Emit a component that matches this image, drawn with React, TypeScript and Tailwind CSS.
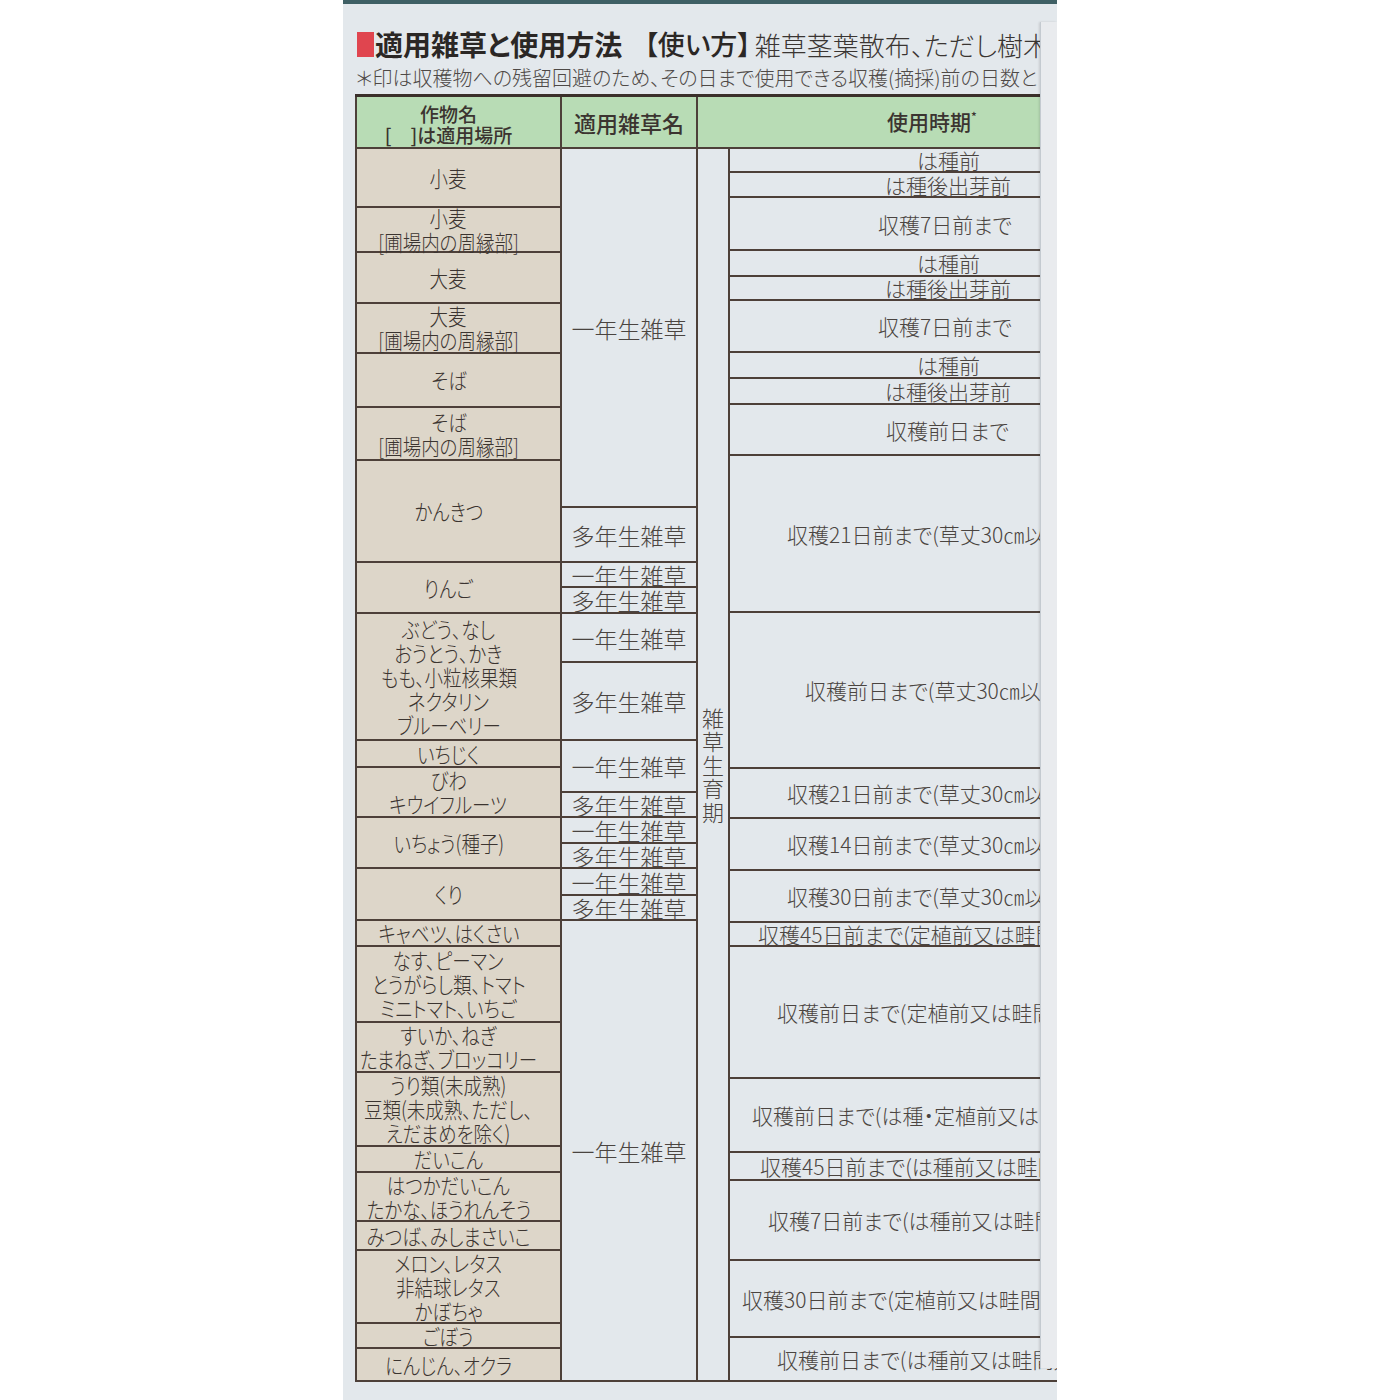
import React from "react";

type Crop = { lines: string[]; h: string };
type Weed = { t: string; h: string };
type Timing = { t: string; h: string; pl: string };

const crops: Crop[] = [
  { lines: ["小麦"], h: "h-[59px]" },
  { lines: ["小麦", "[圃場内の周縁部]"], h: "h-[45px]" },
  { lines: ["大麦"], h: "h-[51px]" },
  { lines: ["大麦", "[圃場内の周縁部]"], h: "h-[50px]" },
  { lines: ["そば"], h: "h-[54px]" },
  { lines: ["そば", "[圃場内の周縁部]"], h: "h-[53px]" },
  { lines: ["かんきつ"], h: "h-[102px]" },
  { lines: ["りんご"], h: "h-[51px]" },
  { lines: ["ぶどう、なし", "おうとう、かき", "もも、小粒核果類", "ネクタリン", "ブルーベリー"], h: "h-[127px]" },
  { lines: ["いちじく"], h: "h-[27px]" },
  { lines: ["びわ", "キウイフルーツ"], h: "h-[50px]" },
  { lines: ["いちょう(種子)"], h: "h-[51px]" },
  { lines: ["くり"], h: "h-[52px]" },
  { lines: ["キャベツ、はくさい"], h: "h-[26px]" },
  { lines: ["なす、ピーマン", "とうがらし類、トマト", "ミニトマト、いちご"], h: "h-[76px]" },
  { lines: ["すいか、ねぎ", "たまねぎ、ブロッコリー"], h: "h-[50px]" },
  { lines: ["うり類(未成熟)", "豆類(未成熟、ただし、", "えだまめを除く)"], h: "h-[74px]" },
  { lines: ["だいこん"], h: "h-[26px]" },
  { lines: ["はつかだいこん", "たかな、ほうれんそう"], h: "h-[49px]" },
  { lines: ["みつば、みしまさいこ"], h: "h-[29px]" },
  { lines: ["メロン、レタス", "非結球レタス", "かぼちゃ"], h: "h-[73px]" },
  { lines: ["ごぼう"], h: "h-[25px]" },
  { lines: ["にんじん、オクラ"], h: "flex-1" },
];

const weeds: Weed[] = [
  { t: "一年生雑草", h: "h-[359px]" },
  { t: "多年生雑草", h: "h-[55px]" },
  { t: "一年生雑草", h: "h-[25px]" },
  { t: "多年生雑草", h: "h-[26px]" },
  { t: "一年生雑草", h: "h-[49px]" },
  { t: "多年生雑草", h: "h-[78px]" },
  { t: "一年生雑草", h: "h-[52px]" },
  { t: "多年生雑草", h: "h-[25px]" },
  { t: "一年生雑草", h: "h-[26px]" },
  { t: "多年生雑草", h: "h-[25px]" },
  { t: "一年生雑草", h: "h-[27px]" },
  { t: "多年生雑草", h: "h-[25px]" },
  { t: "一年生雑草", h: "flex-1" },
];

const timings: Timing[] = [
  { t: "は種前", h: "h-[24px]", pl: "pl-[187px]" },
  { t: "は種後出芽前", h: "h-[25px]", pl: "pl-[155px]" },
  { t: "収穫7日前まで", h: "h-[53px]", pl: "pl-[148px]" },
  { t: "は種前", h: "h-[26px]", pl: "pl-[187px]" },
  { t: "は種後出芽前", h: "h-[24px]", pl: "pl-[155px]" },
  { t: "収穫7日前まで", h: "h-[52px]", pl: "pl-[148px]" },
  { t: "は種前", h: "h-[26px]", pl: "pl-[187px]" },
  { t: "は種後出芽前", h: "h-[26px]", pl: "pl-[155px]" },
  { t: "収穫前日まで", h: "h-[51px]", pl: "pl-[156px]" },
  { t: "収穫21日前まで(草丈30㎝以下)", h: "h-[157px]", pl: "pl-[57px]" },
  { t: "収穫前日まで(草丈30㎝以下)", h: "h-[156px]", pl: "pl-[75px]" },
  { t: "収穫21日前まで(草丈30㎝以下)", h: "h-[50px]", pl: "pl-[57px]" },
  { t: "収穫14日前まで(草丈30㎝以下)", h: "h-[52px]", pl: "pl-[57px]" },
  { t: "収穫30日前まで(草丈30㎝以下)", h: "h-[52px]", pl: "pl-[57px]" },
  { t: "収穫45日前まで(定植前又は畦間処理)", h: "h-[24px]", pl: "pl-[28px]" },
  { t: "収穫前日まで(定植前又は畦間処理)", h: "h-[132px]", pl: "pl-[47px]" },
  { t: "収穫前日まで(は種・定植前又は畦間処理)", h: "h-[74px]", pl: "pl-[22px]" },
  { t: "収穫45日前まで(は種前又は畦間処理)", h: "h-[28px]", pl: "pl-[30px]" },
  { t: "収穫7日前まで(は種前又は畦間処理)", h: "h-[80px]", pl: "pl-[38px]" },
  { t: "収穫30日前まで(定植前又は畦間処理)", h: "h-[77px]", pl: "pl-[12px]" },
  { t: "収穫前日まで(は種前又は畦間処理)", h: "flex-1", pl: "pl-[47px]" },
];

export default function App() {
  return (
    <div className="w-full h-[1400px] bg-white flex justify-center font-['Noto_Sans_CJK_JP','Noto_Sans_CJK_SC',sans-serif] [font-feature-settings:'palt'] text-[#3b3430]">
      <div className="relative w-[714px] h-[1400px] bg-[#e3e8ec] overflow-hidden flex flex-col">
        {/* top edge of the bottle */}
        <div className="h-[4px] bg-[#3f6065] shrink-0" />

        {/* title */}
        <div className="mt-[23px] pl-[14px] flex items-center whitespace-nowrap h-[34px] shrink-0">
          <span className="shrink-0 inline-block w-[17px] h-[25px] bg-[#e0454f] mr-[1px]" />
          <span className="shrink-0 text-[28px] font-bold text-[#2b2725]">適用雑草と使用方法</span>
          <span className="shrink-0 ml-[22px] mr-[4px] text-[27px] font-medium text-[#2b2725]">【使い方】</span>
          <span className="shrink-0 text-[26px] font-light text-[#3a3532]">雑草茎葉散布、ただし樹木等</span>
        </div>
        <div className="mt-[3px] pl-[13px] whitespace-nowrap text-[20px] leading-[28px] font-light text-[#4e4946] shrink-0">
          ＊印は収穫物への残留回避のため、その日まで使用できる収穫(摘採)前の日数と
        </div>

        {/* table */}
        <div className="mt-[2px] ml-[12px] flex-1 flex flex-col border-t-[3px] border-[#3a2f2a] mb-[18px]">
          {/* header */}
          <div className="flex h-[52px] shrink-0 border-b-2 border-[#4d4039] bg-[#b8dcb5]">
            <div className="w-[207px] shrink-0 border-l-2 border-r-2 border-[#4d4039] flex flex-col items-center justify-center pr-5 pt-[3px] text-[19px] leading-[21px] font-medium">
              <div>作物名</div>
              <div>[　]は適用場所</div>
            </div>
            <div className="w-[136px] shrink-0 border-r-2 border-[#4d4039] flex items-center justify-center text-[22px] font-medium">
              適用雑草名
            </div>
            <div className="flex-1 min-w-0 flex items-center pl-[189px] text-[21px] font-medium whitespace-nowrap">
              使用時期<span className="text-[12px] self-start mt-[10px]">*</span>
            </div>
          </div>

          {/* body */}
          <div className="flex-1 flex">
            <div className="w-[207px] shrink-0 border-l-2 border-r-2 border-[#4d4039] bg-[#ddd6c9] flex flex-col">
              {crops.map((c, i) => (
                <div
                  key={i}
                  className={`${c.h} border-b-2 border-[#4d4039] flex flex-col items-center justify-center pr-5 pb-[2px] text-[22px] leading-[24px] font-light whitespace-nowrap`}
                >
                  {c.lines.map((l, j) => (
                    <span key={j} className="inline-block scale-x-[0.84]">
                      {l}
                    </span>
                  ))}
                </div>
              ))}
            </div>

            <div className="w-[136px] shrink-0 border-r-2 border-[#4d4039] flex flex-col">
              {weeds.map((w, i) => (
                <div
                  key={i}
                  className={`${w.h} border-b-2 border-[#4d4039] flex items-center justify-center text-[23px] leading-[24px] font-light text-[#4a4440] whitespace-nowrap`}
                >
                  {w.t}
                </div>
              ))}
            </div>

            <div className="w-[32px] shrink-0 border-r-2 border-b-2 border-[#4d4039] flex flex-col items-center justify-center text-[22px] leading-[23.5px] font-light text-[#4a4440]">
              {"雑草生育期".split("").map((ch, i) => (
                <div key={i}>{ch}</div>
              ))}
            </div>

            <div className="flex-1 min-w-0 flex flex-col">
              {timings.map((t, i) => (
                <div
                  key={i}
                  className={`${t.h} ${t.pl} border-b-2 border-[#4d4039] flex items-center overflow-hidden whitespace-nowrap text-[21px] leading-[24px] font-light text-[#4a4440]`}
                >
                  {t.t}
                </div>
              ))}
            </div>
          </div>
        </div>

        {/* sticker edge over the right side */}
        <div className="absolute right-0 top-[22px] w-[17px] h-[1346px] bg-[#e9ebee] border-l border-[#c4cad0] shadow-[-1px_0_2px_rgba(0,0,0,0.12)]" />
      </div>
    </div>
  );
}
